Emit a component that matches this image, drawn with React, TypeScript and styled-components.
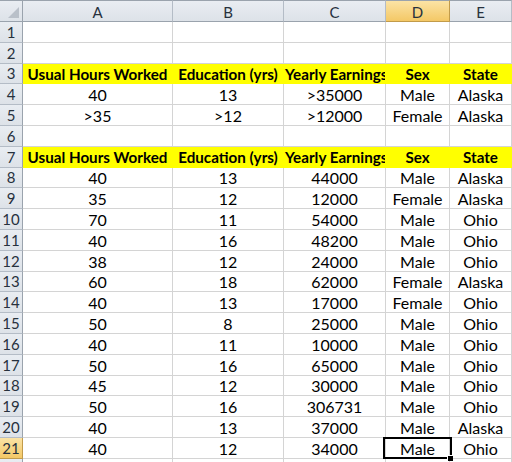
import React from "react";
import styled, { createGlobalStyle, css } from "styled-components";

const Global = createGlobalStyle`
  html, body { margin: 0; padding: 0; background: #fff; }
  body { font-family: "Lato", "Liberation Sans", sans-serif; }
`;

const COLS = ["A", "B", "C", "D", "E"];
const ROW_H = 20.81;

const Sheet = styled.div`
  width: 512px;
  height: 462px;
  overflow: hidden;
  display: grid;
  grid-template-columns: 23px 150px 111px 102px 64px 62px;
  grid-template-rows: 22px;
  grid-auto-rows: ${ROW_H}px;
  font-size: 16px;
  color: #000;
`;

const headerBg = css<{ $sel?: boolean }>`
  background: ${(p) =>
    p.$sel
      ? "linear-gradient(#fbe3a5, #f4c866)"
      : "linear-gradient(#e9edf2, #dde2e8)"};
  color: #27313d;
`;

const Corner = styled.div`
  position: relative;
  box-sizing: border-box;
  background: linear-gradient(#e9edf2, #dde2e8);
  border-top: 1px solid #9aa3ad;
  border-right: 1px solid #9aa3ad;
  border-bottom: 1px solid #9aa3ad;
  &::after {
    content: "";
    position: absolute;
    right: 3px;
    bottom: 3px;
    width: 0;
    height: 0;
    border-left: 11px solid transparent;
    border-bottom: 11px solid #b9c0c9;
  }
`;

const ColHead = styled.div<{ $sel?: boolean }>`
  ${headerBg};
  box-sizing: border-box;
  border-top: 1px solid #9aa3ad;
  border-right: 1px solid ${(p) => (p.$sel ? "#c29b4a" : "#b4bcc6")};
  border-bottom: 1px solid ${(p) => (p.$sel ? "#c29b4a" : "#9aa3ad")};
  display: flex;
  align-items: center;
  justify-content: center;
  font-size: 15px;
  padding-top: 1px;
`;

const RowHead = styled.div<{ $sel?: boolean }>`
  ${headerBg};
  box-sizing: border-box;
  border-right: 1px solid ${(p) => (p.$sel ? "#c29b4a" : "#9aa3ad")};
  border-bottom: 1px solid ${(p) => (p.$sel ? "#c29b4a" : "#b4bcc6")};
  display: flex;
  align-items: center;
  justify-content: center;
  font-size: 15px;
`;

const Cell = styled.div<{ $fill?: boolean; $bold?: boolean; $clip?: boolean; $sel?: boolean }>`
  position: relative;
  box-sizing: border-box;
  border-right: 1px solid ${(p) => (p.$fill ? "#ffff00" : "#d4d4d4")};
  border-bottom: 1px solid ${(p) => (p.$fill ? "#ffff00" : "#d4d4d4")};
  background: ${(p) => (p.$fill ? "#ffff00" : "#fff")};
  font-weight: ${(p) => (p.$bold ? 700 : 400)};
  font-size: ${(p) => (p.$bold ? "15.2px" : "16px")};
  display: flex;
  align-items: center;
  justify-content: ${(p) => (p.$clip ? "flex-start" : "center")};
  padding-left: ${(p) => (p.$clip ? "1px" : "0")};
  white-space: nowrap;
  overflow: ${(p) => (p.$sel ? "visible" : "hidden")};
  z-index: ${(p) => (p.$sel ? 2 : "auto")};
  padding-top: 1px;
  ${(p) =>
    p.$sel &&
    css`
      &::before {
        content: "";
        position: absolute;
        left: -3px;
        top: -1px;
        right: -3px;
        bottom: -1px;
        border: 2px solid #000;
      }
      &::after {
        content: "";
        position: absolute;
        right: -4px;
        bottom: -3px;
        width: 5px;
        height: 5px;
        background: #000;
        border: 1px solid #fff;
        border-width: 1px 0 0 1px;
      }
    `}
`;

const HEAD = ["Usual Hours Worked", "Education (yrs)", "Yearly Earnings", "Sex", "State"];

const rows: (string[] | "head" | null)[] = [
  null,
  null,
  "head",
  ["40", "13", ">35000", "Male", "Alaska"],
  [">35", ">12", ">12000", "Female", "Alaska"],
  null,
  "head",
  ["40", "13", "44000", "Male", "Alaska"],
  ["35", "12", "12000", "Female", "Alaska"],
  ["70", "11", "54000", "Male", "Ohio"],
  ["40", "16", "48200", "Male", "Ohio"],
  ["38", "12", "24000", "Male", "Ohio"],
  ["60", "18", "62000", "Female", "Alaska"],
  ["40", "13", "17000", "Female", "Ohio"],
  ["50", "8", "25000", "Male", "Ohio"],
  ["40", "11", "10000", "Male", "Ohio"],
  ["50", "16", "65000", "Male", "Ohio"],
  ["45", "12", "30000", "Male", "Ohio"],
  ["50", "16", "306731", "Male", "Ohio"],
  ["40", "13", "37000", "Male", "Alaska"],
  ["40", "12", "34000", "Male", "Ohio"],
  null,
];

export default function App() {
  return (
    <>
      <Global />
      <Sheet>
        <Corner />
        {COLS.map((c) => (
          <ColHead key={c} $sel={c === "D"}>
            {c}
          </ColHead>
        ))}
        {rows.map((r, i) => {
          const n = i + 1;
          return (
            <React.Fragment key={n}>
              <RowHead $sel={n === 21}>{n <= 21 ? n : ""}</RowHead>
              {COLS.map((c, j) => {
                if (r === "head") {
                  return (
                    <Cell key={c} $fill $bold $clip={j === 2}>
                      {HEAD[j]}
                    </Cell>
                  );
                }
                return (
                  <Cell key={c} $sel={n === 21 && j === 3}>
                    {r ? r[j] : ""}
                  </Cell>
                );
              })}
            </React.Fragment>
          );
        })}
      </Sheet>
    </>
  );
}
